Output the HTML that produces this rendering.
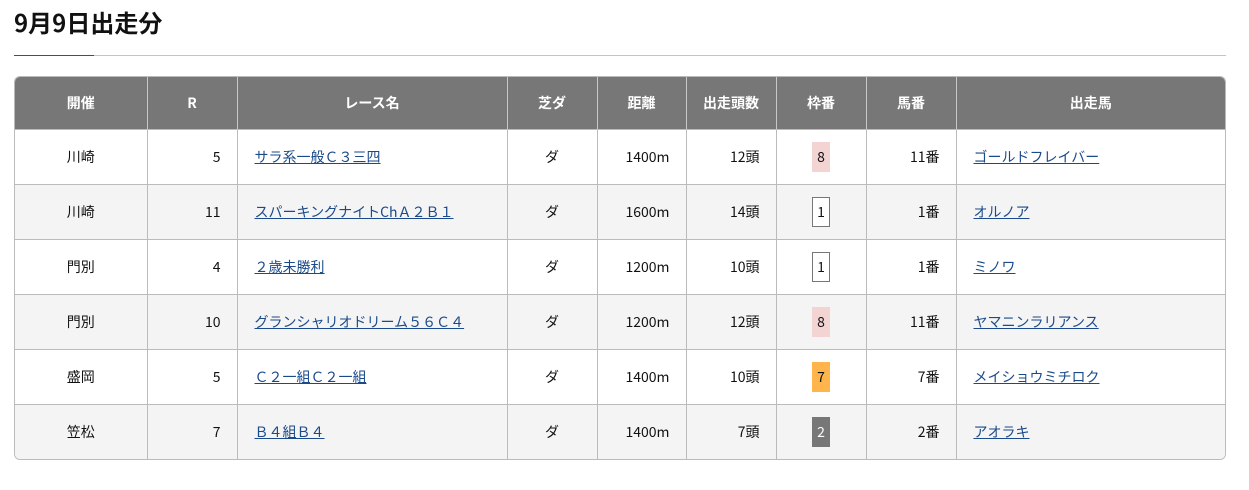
<!DOCTYPE html>
<html><head><meta charset="utf-8"><style>
body{margin:0;background:#fff;font-family:"Liberation Sans","Noto Sans CJK JP",sans-serif;color:#111;width:1249px;height:490px;overflow:hidden}
h1{position:absolute;left:14px;top:5px;margin:0;font-size:24px;font-weight:bold;line-height:34px;font-family:"Noto Sans CJK JP",sans-serif}
.ln{position:absolute;left:14px;top:55px;width:1212px;height:1px;background:#c4c4c4}
.ln2{position:absolute;left:14px;top:55px;width:80px;height:1px;background:#1e6b2e}
.wrap{position:absolute;left:14px;top:76px;width:1210px;border:1px solid #bbb;border-radius:6px;overflow:hidden}
table{border-collapse:collapse;width:1210px;table-layout:fixed;font-size:14px;font-family:"Noto Sans CJK JP",sans-serif}
th{background:#777;color:#fff;font-weight:bold;height:52px;border-left:1px solid #c8c8c8;padding:0}
td{height:54px;border-top:1px solid #bbb;border-left:1px solid #bbb;padding:0;text-align:center}
th:first-child,td:first-child{border-left:none}
tr:nth-child(odd) td{background:#f4f4f4}
.r{text-align:right;padding-right:16px}
.l{text-align:left;padding-left:17px}
a{color:#1a4a8a;text-decoration:underline}
.b{display:inline-block;width:16px;height:28px;line-height:28px;text-align:center}
.w{border:1px solid #777;background:#fff}
.p{background:#f4d3d3;width:18px;height:30px;line-height:30px}
.o{background:#ffb44c;width:18px;height:30px;line-height:30px}
.g{background:#777;color:#fff;width:18px;height:30px;line-height:30px}
</style></head><body>
<h1>9月9日出走分</h1>
<div class="ln"></div><div class="ln2"></div>
<div class="wrap"><table>
<colgroup><col style="width:132px"><col style="width:90px"><col style="width:270px"><col style="width:90px"><col style="width:89px"><col style="width:90px"><col style="width:90px"><col style="width:90px"><col style="width:269px"></colgroup>
<tr><th>開催</th><th>R</th><th>レース名</th><th>芝ダ</th><th>距離</th><th>出走頭数</th><th>枠番</th><th>馬番</th><th>出走馬</th></tr>
<tr><td>川崎</td><td class="r">5</td><td class="l"><a>サラ系一般Ｃ３三四</a></td><td>ダ</td><td class="r">1400m</td><td class="r">12頭</td><td><span class="b p">8</span></td><td class="r">11番</td><td class="l"><a>ゴールドフレイバー</a></td></tr>
<tr><td>川崎</td><td class="r">11</td><td class="l"><a>スパーキングナイトChＡ２Ｂ１</a></td><td>ダ</td><td class="r">1600m</td><td class="r">14頭</td><td><span class="b w">1</span></td><td class="r">1番</td><td class="l"><a>オルノア</a></td></tr>
<tr><td>門別</td><td class="r">4</td><td class="l"><a>２歳未勝利</a></td><td>ダ</td><td class="r">1200m</td><td class="r">10頭</td><td><span class="b w">1</span></td><td class="r">1番</td><td class="l"><a>ミノワ</a></td></tr>
<tr><td>門別</td><td class="r">10</td><td class="l"><a>グランシャリオドリーム５６Ｃ４</a></td><td>ダ</td><td class="r">1200m</td><td class="r">12頭</td><td><span class="b p">8</span></td><td class="r">11番</td><td class="l"><a>ヤマニンラリアンス</a></td></tr>
<tr><td>盛岡</td><td class="r">5</td><td class="l"><a>Ｃ２一組Ｃ２一組</a></td><td>ダ</td><td class="r">1400m</td><td class="r">10頭</td><td><span class="b o">7</span></td><td class="r">7番</td><td class="l"><a>メイショウミチロク</a></td></tr>
<tr><td>笠松</td><td class="r">7</td><td class="l"><a>Ｂ４組Ｂ４</a></td><td>ダ</td><td class="r">1400m</td><td class="r">7頭</td><td><span class="b g">2</span></td><td class="r">2番</td><td class="l"><a>アオラキ</a></td></tr>
</table></div>
</body></html>
